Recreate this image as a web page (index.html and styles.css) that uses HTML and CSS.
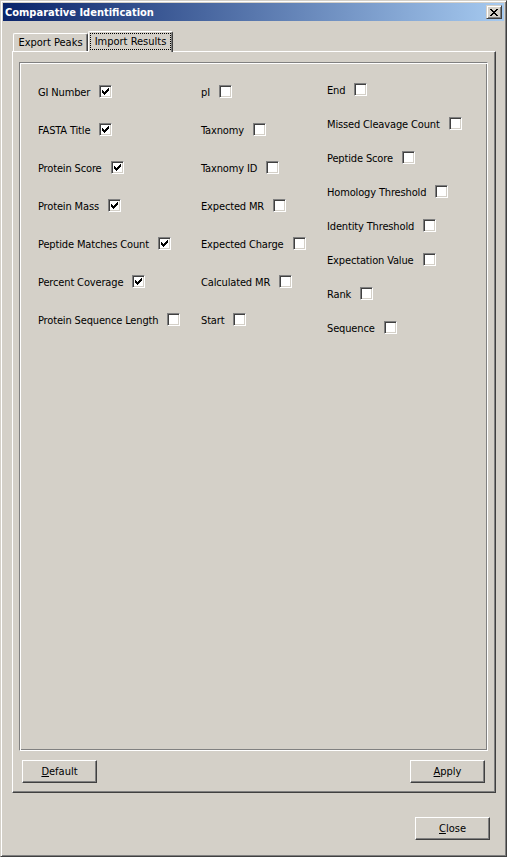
FILE: index.html
```html
<!DOCTYPE html>
<html>
<head>
<meta charset="utf-8">
<title>Comparative Identification</title>
<link rel="stylesheet" href="styles.css">
</head>
<body>
<div class="window">
  <div class="titlebar">
    <span class="title">Comparative Identification</span>
    <span class="tb-close"><svg width="8" height="7" viewBox="0 0 8 7" shape-rendering="crispEdges"><path d="M0 0h2v1H0zM6 0h2v1H6zM1 1h2v1H1zM5 1h2v1H5zM2 2h4v1H2zM3 3h2v1H3zM2 4h4v1H2zM1 5h2v1H1zM5 5h2v1H5zM0 6h2v1H0zM6 6h2v1H6z" fill="#000"/></svg></span>
  </div>
  <div class="tabs">
    <div class="tab tab-1">Export Peaks</div>
    <div class="tab active"><span class="focus">Import Results</span></div>
  </div>
  <div class="pane">
    <div class="group">
      <div class="col col-a">
        <div class="item"><span class="lbl">GI Number</span><span class="cb"><svg width="7" height="7" viewBox="0 0 7 7" shape-rendering="crispEdges"><path d="M0 2h1v3H0zM1 3h1v3H1zM2 4h1v3H2zM3 3h1v3H3zM4 2h1v3H4zM5 1h1v3H5zM6 0h1v3H6z"/></svg></span></div>
        <div class="item"><span class="lbl">FASTA Title</span><span class="cb"><svg width="7" height="7" viewBox="0 0 7 7" shape-rendering="crispEdges"><path d="M0 2h1v3H0zM1 3h1v3H1zM2 4h1v3H2zM3 3h1v3H3zM4 2h1v3H4zM5 1h1v3H5zM6 0h1v3H6z"/></svg></span></div>
        <div class="item"><span class="lbl">Protein Score</span><span class="cb"><svg width="7" height="7" viewBox="0 0 7 7" shape-rendering="crispEdges"><path d="M0 2h1v3H0zM1 3h1v3H1zM2 4h1v3H2zM3 3h1v3H3zM4 2h1v3H4zM5 1h1v3H5zM6 0h1v3H6z"/></svg></span></div>
        <div class="item"><span class="lbl">Protein Mass</span><span class="cb"><svg width="7" height="7" viewBox="0 0 7 7" shape-rendering="crispEdges"><path d="M0 2h1v3H0zM1 3h1v3H1zM2 4h1v3H2zM3 3h1v3H3zM4 2h1v3H4zM5 1h1v3H5zM6 0h1v3H6z"/></svg></span></div>
        <div class="item"><span class="lbl">Peptide Matches Count</span><span class="cb"><svg width="7" height="7" viewBox="0 0 7 7" shape-rendering="crispEdges"><path d="M0 2h1v3H0zM1 3h1v3H1zM2 4h1v3H2zM3 3h1v3H3zM4 2h1v3H4zM5 1h1v3H5zM6 0h1v3H6z"/></svg></span></div>
        <div class="item"><span class="lbl">Percent Coverage</span><span class="cb"><svg width="7" height="7" viewBox="0 0 7 7" shape-rendering="crispEdges"><path d="M0 2h1v3H0zM1 3h1v3H1zM2 4h1v3H2zM3 3h1v3H3zM4 2h1v3H4zM5 1h1v3H5zM6 0h1v3H6z"/></svg></span></div>
        <div class="item"><span class="lbl">Protein Sequence Length</span><span class="cb"></span></div>
      </div>
      <div class="col col-b">
        <div class="item"><span class="lbl">pI</span><span class="cb"></span></div>
        <div class="item"><span class="lbl">Taxnomy</span><span class="cb"></span></div>
        <div class="item"><span class="lbl">Taxnomy ID</span><span class="cb"></span></div>
        <div class="item"><span class="lbl">Expected MR</span><span class="cb"></span></div>
        <div class="item"><span class="lbl">Expected Charge</span><span class="cb"></span></div>
        <div class="item"><span class="lbl">Calculated MR</span><span class="cb"></span></div>
        <div class="item"><span class="lbl">Start</span><span class="cb"></span></div>
      </div>
      <div class="col col-c">
        <div class="item"><span class="lbl">End</span><span class="cb"></span></div>
        <div class="item"><span class="lbl">Missed Cleavage Count</span><span class="cb"></span></div>
        <div class="item"><span class="lbl">Peptide Score</span><span class="cb"></span></div>
        <div class="item"><span class="lbl">Homology Threshold</span><span class="cb"></span></div>
        <div class="item"><span class="lbl">Identity Threshold</span><span class="cb"></span></div>
        <div class="item"><span class="lbl">Expectation Value</span><span class="cb"></span></div>
        <div class="item"><span class="lbl">Rank</span><span class="cb"></span></div>
        <div class="item"><span class="lbl">Sequence</span><span class="cb"></span></div>
      </div>
    </div>
    <div class="pane-buttons">
      <button class="btn"><u>D</u>efault</button>
      <button class="btn"><u>A</u>pply</button>
    </div>
  </div>
  <div class="footer">
    <button class="btn"><u>C</u>lose</button>
  </div>
</div>
</body>
</html>
```

FILE: styles.css
```css
html, body {
  margin: 0;
  padding: 0;
  background: #d4d0c8;
}

body {
  font-family: "DejaVu Sans Condensed", "DejaVu Sans", sans-serif;
  font-size: 11px;
  color: #000;
}

.window {
  width: 507px;
  height: 857px;
  box-sizing: border-box;
  border: 1px solid;
  border-color: #d4d0c8 #404040 #404040 #d4d0c8;
  box-shadow: inset 1px 1px 0 #fff, inset -1px -1px 0 #808080;
  padding: 2px;
  background: #d4d0c8;
  display: flex;
  flex-direction: column;
}

.titlebar {
  height: 18px;
  flex: none;
  display: flex;
  align-items: center;
  justify-content: space-between;
  padding: 0 2px 0 2px;
  background: linear-gradient(to right, #0a246a, #a6caf0);
}

.title {
  color: #fff;
  font-weight: bold;
  font-size: 11px;
  padding-top: 1px;
}

.tb-close {
  width: 16px;
  height: 14px;
  box-sizing: border-box;
  background: #d4d0c8;
  border: 1px solid;
  border-color: #d4d0c8 #404040 #404040 #d4d0c8;
  box-shadow: inset 1px 1px 0 #fff, inset -1px -1px 0 #808080;
  display: flex;
  align-items: center;
  justify-content: center;
}

.tabs {
  display: flex;
  align-items: flex-end;
  height: 20px;
  margin-top: 10px;
  padding-left: 10px;
  position: relative;
  z-index: 2;
}

.tab {
  height: 18px;
  box-sizing: border-box;
  border-top: 1px solid #fff;
  border-left: 1px solid #fff;
  border-right: 1px solid #404040;
  border-radius: 2px 2px 0 0;
  box-shadow: inset -1px 0 0 #808080;
  background: #d4d0c8;
  display: flex;
  align-items: center;
  justify-content: center;
}

.tab-1 {
  width: 75px;
}

.tab.active {
  width: 85px;
  height: 21px;
  margin-bottom: -1px;
  padding: 1px 1px 0 1px;
  align-items: flex-start;
}

.focus {
  width: 81px;
  height: 17px;
  box-sizing: border-box;
  border: 1px dotted #000;
  display: flex;
  align-items: center;
  justify-content: center;
}

.pane {
  width: 484px;
  height: 742px;
  margin-left: 9px;
  box-sizing: border-box;
  border: 1px solid;
  border-color: #fff #404040 #404040 #fff;
  box-shadow: inset -1px -1px 0 #808080;
  display: flex;
  flex-direction: column;
  flex: none;
}

.group {
  width: 469px;
  height: 689px;
  margin: 10px 0 0 6px;
  box-sizing: border-box;
  border: 1px solid;
  border-color: #808080 #fff #fff #808080;
  box-shadow: inset 1px 1px 0 #fff, inset -1px -1px 0 #808080;
  display: grid;
  grid-template-columns: 163px 126px 1fr;
  align-items: start;
  padding-left: 18px;
}

.col {
  display: flex;
  flex-direction: column;
  align-items: flex-start;
}

.col-a, .col-b {
  padding-top: 22px;
  gap: 25px;
}

.col-c {
  padding-top: 20px;
  gap: 21px;
}

.item {
  display: flex;
  align-items: center;
  height: 13px;
  white-space: nowrap;
}

.lbl {
  margin-right: 9px;
  margin-top: 2px;
  letter-spacing: -0.15px;
}

.cb {
  width: 13px;
  height: 13px;
  box-sizing: border-box;
  border: 1px solid;
  border-color: #808080 #fff #fff #808080;
  box-shadow: inset 1px 1px 0 #404040, inset -1px -1px 0 #d4d0c8;
  background: #fff;
  display: flex;
  align-items: center;
  justify-content: center;
}

.pane-buttons {
  display: flex;
  justify-content: space-between;
  margin-top: 9px;
  padding: 0 10px 0 9px;
}

.btn {
  width: 75px;
  height: 23px;
  box-sizing: border-box;
  margin: 0;
  padding: 0;
  font-family: inherit;
  font-size: 11px;
  color: #000;
  background: #d4d0c8;
  border: 1px solid;
  border-color: #fff #404040 #404040 #fff;
  box-shadow: inset -1px -1px 0 #808080;
  border-radius: 0;
}

.footer {
  display: flex;
  justify-content: flex-end;
  margin-top: 24px;
  padding-right: 14px;
}
```
